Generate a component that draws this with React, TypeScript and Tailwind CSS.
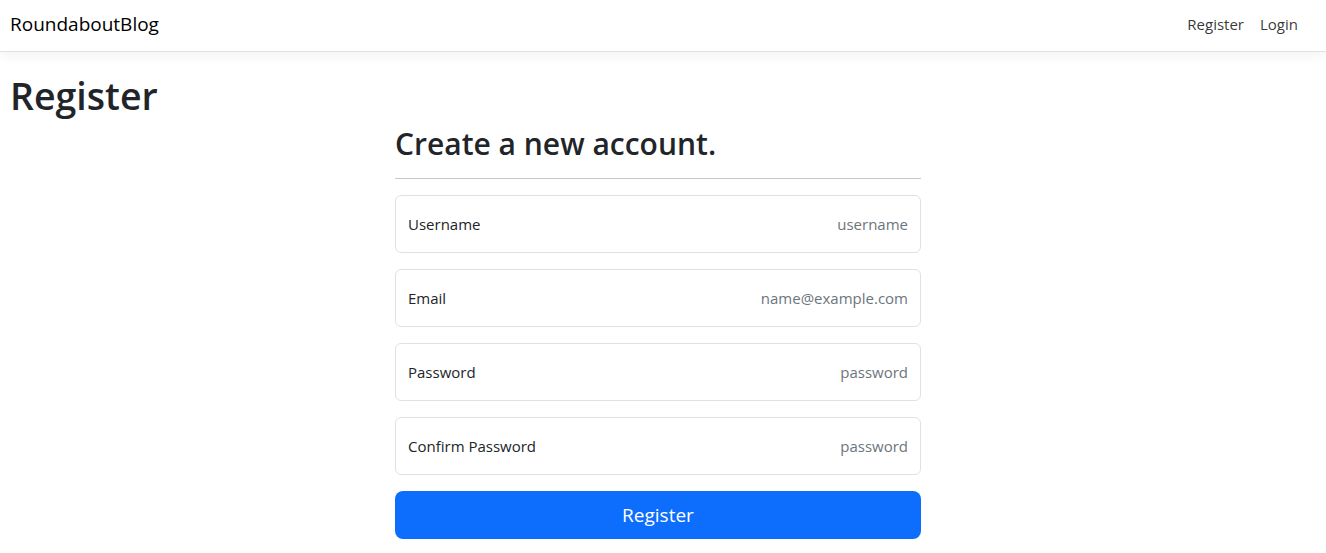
import React from "react";

const fields = [
  { label: "Username", placeholder: "username", type: "text" },
  { label: "Email", placeholder: "name@example.com", type: "email" },
  { label: "Password", placeholder: "password", type: "password" },
  { label: "Confirm Password", placeholder: "password", type: "password" },
];

const App = () => {
  return (
    <div className="min-h-screen bg-white text-[#212529] font-['Open_Sans',sans-serif]">
      <nav className="h-[52px] border-b border-[#dee2e6] bg-white shadow-[0_4px_12px_rgba(0,0,0,0.05)] flex items-center justify-between px-[10px] pb-[3px]">
        <a href="#" className="text-[19px] text-black">
          RoundaboutBlog
        </a>
        <ul className="flex items-center gap-4 pr-[18px] text-[15px] text-black/80">
          <li>
            <a href="#">Register</a>
          </li>
          <li>
            <a href="#">Login</a>
          </li>
        </ul>
      </nav>

      <main className="px-[10px]">
        <h1 className="text-[37.5px] font-semibold leading-[1.2] mt-[21px] mb-2">
          Register
        </h1>
        <div className="w-[526px] ml-[385px] mt-[1px]">
          <h2 className="text-[30px] font-semibold leading-[1.2] mb-2">
            Create a new account.
          </h2>
          <hr className="border-t border-[#c8c8c8] mt-4 mb-4" />
          <form className="flex flex-col gap-4">
            {fields.map((f) => (
              <label
                key={f.label}
                className="h-[58px] rounded-md border border-[#dee2e6] bg-white flex items-center justify-between px-3"
              >
                <span className="text-[15px]">{f.label}</span>
                <input
                  type={f.type}
                  placeholder={f.placeholder}
                  className="w-[260px] text-right text-[15px] outline-none placeholder:text-[#6c757d]"
                />
              </label>
            ))}
            <button
              type="button"
              className="h-[48px] rounded-lg bg-[#0d6efd] text-white text-[19px]"
            >
              Register
            </button>
          </form>
        </div>
      </main>
    </div>
  );
};

export default App;
